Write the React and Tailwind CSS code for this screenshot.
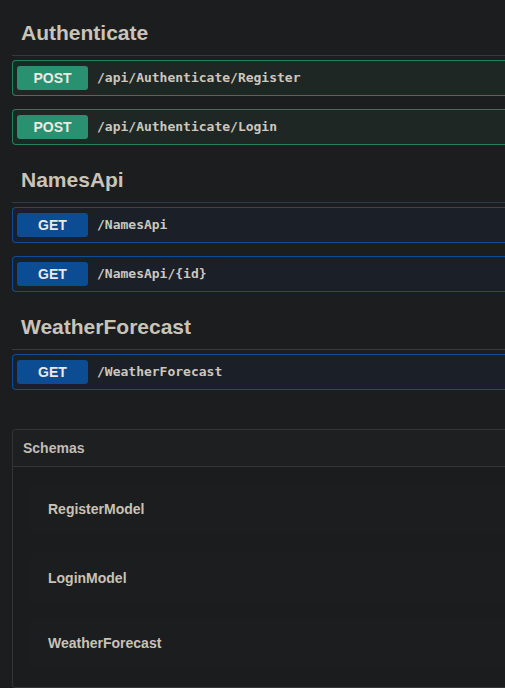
import React from "react";

const sections = [
  {
    name: "Authenticate",
    ops: [
      { method: "POST", path: "/api/Authenticate/Register" },
      { method: "POST", path: "/api/Authenticate/Login" },
    ],
  },
  {
    name: "NamesApi",
    ops: [
      { method: "GET", path: "/NamesApi" },
      { method: "GET", path: "/NamesApi/{id}" },
    ],
  },
  {
    name: "WeatherForecast",
    ops: [{ method: "GET", path: "/WeatherForecast" }],
  },
];

const Operation = ({ method, path }) => {
  const isPost = method === "POST";
  return (
    <div
      className={`flex items-center h-[36px] pl-[4px] border rounded-[4px] border-r-0 rounded-r-none mb-[13px] ${
        isPost ? "bg-[#1f2725] border-[#25805a]" : "bg-[#1a1f28] border-[#0b4d96]"
      }`}
    >
      <span
        className={`w-[71px] h-[24px] flex items-center justify-center rounded-[3px] text-[14px] font-bold text-[#ece9e4] ${
          isPost ? "bg-[#2a9170]" : "bg-[#0b4c92]"
        }`}
        style={{ fontFamily: '"Liberation Sans", Arial, sans-serif' }}
      >
        {method}
      </span>
      <span
        className="ml-[9px] text-[13px] font-semibold text-[#cdc7be]"
        style={{ fontFamily: '"DejaVu Sans Mono", monospace' }}
      >
        {path}
      </span>
    </div>
  );
};

const models = [
  { name: "RegisterModel", mb: "mb-[19px]" },
  { name: "LoginModel", mb: "mb-[15px]" },
  { name: "WeatherForecast", mb: "mb-0" },
];

export default function App() {
  return (
    <div
      className="w-[505px] h-[688px] overflow-hidden bg-[#1c1d1f]"
      style={{ fontFamily: '"Liberation Sans", Arial, sans-serif' }}
    >
      <div className="w-[620px] ml-[12px] pt-[11px]">
        {sections.map((s) => (
          <div key={s.name}>
            <div className="h-[45px] flex items-center pl-[9px] border-b border-[#37393b] mb-[4px]">
              <h2 className="text-[21px] font-bold text-[#c9c3b9]">{s.name}</h2>
            </div>
            {s.ops.map((op) => (
              <Operation key={op.path} {...op} />
            ))}
          </div>
        ))}

        <div className="mt-[39px] border border-[#333537] rounded-[4px] border-r-0 rounded-r-none h-[259px] overflow-hidden">
          <div className="h-[37px] flex items-center pl-[10px] border-b border-[#333537] bg-[#1e1f21]">
            <span className="text-[14px] font-bold text-[#c3bdb3]">Schemas</span>
          </div>
          <div className="h-full pt-[17px] pl-[17px] bg-[#1b1c1d]">
            {models.map((m) => (
              <div
                key={m.name}
                className={`h-[50px] flex items-center pl-[18px] rounded-[4px] bg-[#1c1d1e] ${m.mb}`}
              >
                <span className="text-[14px] font-bold text-[#c8c2b8]">{m.name}</span>
              </div>
            ))}
          </div>
        </div>
      </div>
    </div>
  );
}
